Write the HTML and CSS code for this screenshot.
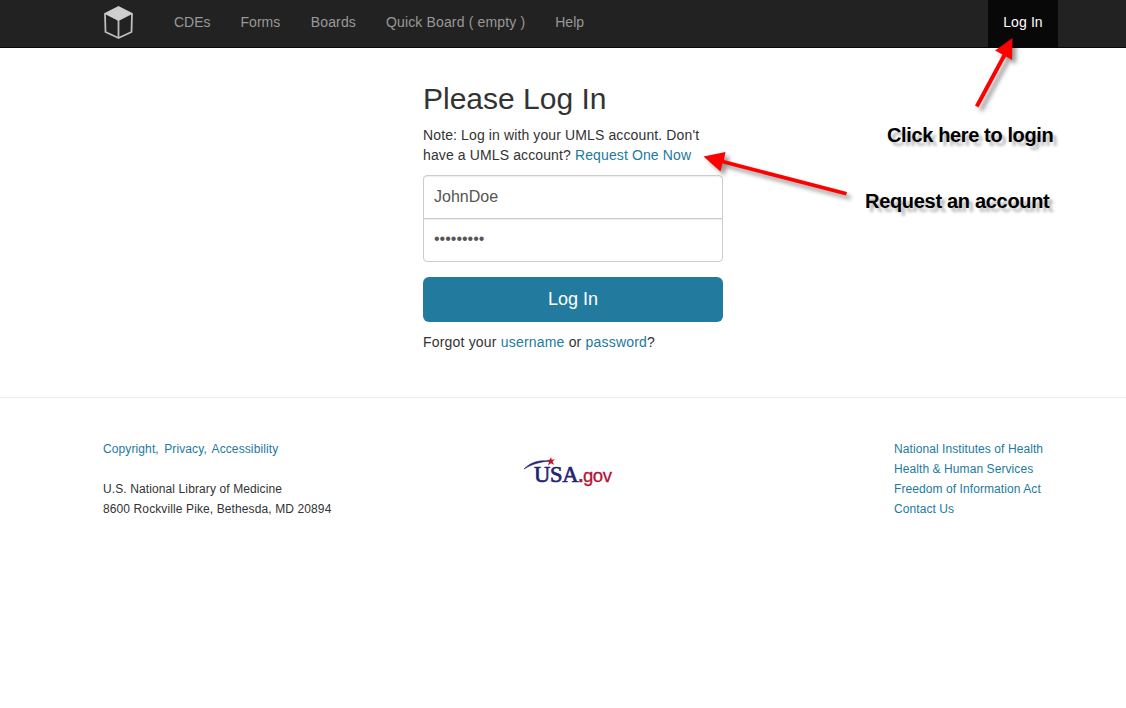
FILE: index.html
```html
<!DOCTYPE html>
<html lang="en">
<head>
<meta charset="utf-8">
<title>Please Log In</title>
<link rel="stylesheet" href="styles.css">
</head>
<body>
<header class="navbar">
  <a class="brand" href="#" aria-label="Home">
    <svg width="30" height="34" viewBox="0 0 30 34">
      <path d="M14.5 1 L28 7.7 L27.5 26 L14.5 32 L1.5 26 L1 7.7 Z" fill="#222" stroke="#bdbdbd" stroke-width="1.8" stroke-linejoin="round"/>
      <path d="M14.5 .5 L28.6 7.7 L14.5 15 L.4 7.7 Z" fill="#cecece"/>
      <path d="M14.5 14 V32" stroke="#bdbdbd" stroke-width="1.8"/>
    </svg>
  </a>
  <nav class="menu">
    <a href="#">CDEs</a>
    <a href="#">Forms</a>
    <a class="boards" href="#">Boards</a>
    <a class="quick" href="#">Quick Board ( empty )</a>
    <a href="#">Help</a>
  </nav>
  <a class="login-tab" href="#">Log In</a>
</header>

<main class="main">
  <form class="signin">
    <h2 class="title">Please Log In</h2>
    <p class="note">Note: Log in with your UMLS account. Don't<br>have a UMLS account? <a href="#">Request One Now</a></p>
    <input class="field field-user" type="text" value="JohnDoe" aria-label="Username">
    <input class="field field-pass" type="password" value="password1" aria-label="Password">
    <button class="submit" type="button">Log In</button>
    <p class="forgot">Forgot your <a href="#">username</a> or <a href="#">password</a>?</p>
  </form>
</main>

<footer class="footer">
  <div class="address">
    <p class="legal"><a href="#">Copyright,</a> <a href="#">Privacy,</a> <a href="#">Accessibility</a></p>
    <p>U.S. National Library of Medicine</p>
    <p>8600 Rockville Pike, Bethesda, MD 20894</p>
  </div>
  <svg class="usa" width="92" height="32" viewBox="0 0 92 32" role="img" aria-label="USA.gov">
    <path d="M1 13 C8 6 16 4 26 5 C17 6 9 8 1 13 Z" fill="#23246f" stroke="#23246f" stroke-width=".6"/>
    <text x="11" y="25.5"><tspan class="usa-name">USA</tspan><tspan class="usa-dot">.</tspan><tspan class="usa-gov">gov</tspan></text>
    <path d="M28 1 L28.8 3.8 L32 3.2 L29.6 5.6 L31 9 L28 7.2 L25 9.4 L26 6 L23.6 4 L26.8 3.8 Z" fill="#c4122f"/>
  </svg>
  <div class="links">
    <a href="#">National Institutes of Health</a>
    <a href="#">Health &amp; Human Services</a>
    <a href="#">Freedom of Information Act</a>
    <a href="#">Contact Us</a>
  </div>
</footer>

<svg class="arrow arrow-login" width="60" height="90" viewBox="970 30 60 90">
  <path d="M1012.5 38 L1012 60 L1006 56.5 L978.5 107.5 L975 105.5 L1002.5 54.5 L995 50.5 Z" fill="#f00"/>
</svg>
<svg class="arrow arrow-request" width="170" height="70" viewBox="695 140 170 70">
  <path d="M703.5 156.5 L725.5 152 L724 160 L847 192 L846 195.5 L722.5 163.5 L720.5 171.5 Z" fill="#f00"/>
</svg>
<div class="callout callout-login">Click here to login</div>
<div class="callout callout-request">Request an account</div>
</body>
</html>
```
FILE: styles.css
```css
* { box-sizing: border-box; }
body {
  margin: 0;
  background: #fff;
  color: #333;
  font: 14px/20px "Liberation Sans", Arial, sans-serif;
  position: relative;
}
a { color: #227a9e; text-decoration: none; }
p { margin: 0; }

.navbar {
  display: flex;
  height: 48px;
  padding: 0 68px 0 104px;
  background: #222;
  border-bottom: 1px solid #080808;
}
.brand { width: 55px; padding-top: 6px; }
.brand svg { display: block; }
.menu { display: flex; flex: 1; }
.menu a { padding: 12px 15px; color: #999; white-space: nowrap; }
.menu .boards { padding-left: 15.6px; letter-spacing: .12px; }
.quick { letter-spacing: .15px; }
.login-tab {
  width: 70px;
  padding: 12px 0;
  background: #080808;
  color: #fff;
  letter-spacing: .1px;
  text-align: center;
}

.main { padding: 34px 0 45px 423px; border-bottom: 1px solid #eee; }
.signin { width: 300px; }
.title { margin: 0 0 9px; font-size: 30px; line-height: 34px; font-weight: 400; }
.note { white-space: nowrap; margin-bottom: 10px; letter-spacing: .12px; }
.field {
  display: block;
  width: 300px;
  height: 44px;
  padding: 10px;
  border: 1px solid #ccc;
  background: #fff;
  box-shadow: inset 0 1px 1px rgba(0, 0, 0, .075);
  color: #555;
  font: 16px "Liberation Sans", Arial, sans-serif;
  outline: 0;
}
.field-user { border-radius: 4px 4px 0 0; }
.field-pass { margin: -1px 0 15px; padding: 9px 10px 11px; border-radius: 0 0 4px 4px; }
.submit {
  display: block;
  width: 300px;
  height: 45px;
  margin-bottom: 10px;
  padding: 0 0 2px;
  border: 0;
  border-radius: 6px;
  background: #227a9e;
  color: #fff;
  font: 18px/24px "Liberation Sans", Arial, sans-serif;
}
.forgot { letter-spacing: .19px; }

.footer {
  display: flex;
  padding: 41px 0 0 103px;
  font-size: 12px;
}
.address { width: 420px; letter-spacing: .11px; }
.legal { margin-bottom: 20px; word-spacing: 1.9px; }
.usa { margin: 17px 279px 0 0; }
.usa-name { font: 22.5px "Liberation Serif", serif; fill: #23246f; stroke: #23246f; stroke-width: .7px; letter-spacing: -.3px; }
.usa-gov, .usa-dot { font: 18.5px "Liberation Sans", Arial, sans-serif; fill: #b31237; stroke: #b31237; stroke-width: .3px; letter-spacing: -.4px; }
.usa-dot { font-weight: 700; }
.links { display: flex; flex-direction: column; letter-spacing: .08px; }

.arrow { position: absolute; filter: drop-shadow(4px 4px 2px rgba(0, 0, 0, .4)); }
.arrow-login { left: 970px; top: 30px; }
.arrow-request { left: 695px; top: 140px; }
.callout {
  position: absolute;
  color: #000;
  font-size: 20px;
  line-height: 24px;
  font-weight: 700;
  white-space: nowrap;
  text-shadow: 4px 4px 3px rgba(0, 0, 0, .28);
}
.callout-login { left: 887px; top: 123px; letter-spacing: -.37px; }
.callout-request { left: 865px; top: 189px; letter-spacing: -.31px; }
```
